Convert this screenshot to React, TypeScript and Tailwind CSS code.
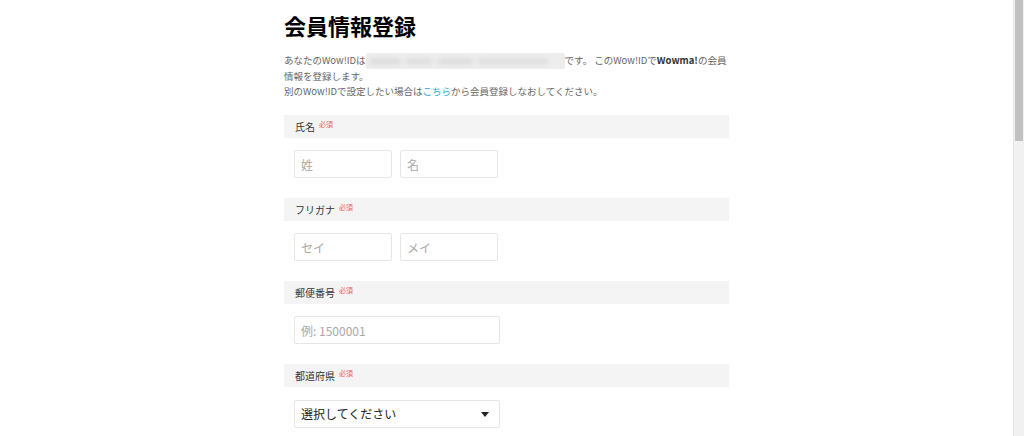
const font = { fontFamily: '"Noto Sans CJK JP", "Noto Sans", sans-serif' };

function Required() {
  return <span className="ml-[4px] text-[7px] leading-none text-[#f25a5a] relative -top-[2px]">必須</span>;
}

function SectionHead({ label }: { label: string }) {
  return (
    <div className="h-[23px] bg-[#f4f4f4] flex items-center pl-[11px] text-[10px] text-[#333]">
      {label}
      <Required />
    </div>
  );
}

function TextBox({ placeholder, width }: { placeholder: string; width: string }) {
  return (
    <input
      placeholder={placeholder}
      className={`${width} h-[28px] border border-[#e6e6e6] rounded-[2px] px-[6px] text-[12px] text-[#333] placeholder-[#a8a8a8] outline-none`}
      style={font}
    />
  );
}

// blurred-out e-mail address
function Masked() {
  return (
    <span className="inline-flex items-center gap-[6px] align-middle w-[199px] h-[16px] bg-[#ededed] rounded-[2px] overflow-hidden px-[4px]">
      <span className="w-[30px] h-[5px] bg-[#dadada] blur-[2px]" />
      <span className="w-[26px] h-[5px] bg-[#dcdcdc] blur-[2px]" />
      <span className="w-[34px] h-[5px] bg-[#dadada] blur-[2px]" />
      <span className="w-[70px] h-[5px] bg-[#dedede] blur-[2px]" />
    </span>
  );
}

export default function App() {
  return (
    <div className="flex h-[436px] w-[1024px] overflow-hidden bg-white" style={font}>
      <div className="flex-1">
        <div className="mx-auto w-[445px] pt-[11px]">
          <h1 className="text-[22px] leading-[28px] font-bold text-black">会員情報登録</h1>

          <p className="mt-[14px] mb-[16px] text-[9.5px] leading-[15px] text-[#666]">
            あなたのWow!IDは<Masked />です。 このWow!IDで<b className="text-[#333]">Wowma!</b>の会員情報を登録します。
            <br />
            別のWow!IDで設定したい場合は<span className="text-[#29a9d6]">こちら</span>から会員登録しなおしてください。
          </p>

          <div className="flex flex-col">
            <SectionHead label="氏名" />
            <div className="flex gap-[8px] pl-[10px] mt-[12px] mb-[20px]">
              <TextBox placeholder="姓" width="w-[98px]" />
              <TextBox placeholder="名" width="w-[98px]" />
            </div>

            <SectionHead label="フリガナ" />
            <div className="flex gap-[8px] pl-[10px] mt-[12px] mb-[20px]">
              <TextBox placeholder="セイ" width="w-[98px]" />
              <TextBox placeholder="メイ" width="w-[98px]" />
            </div>

            <SectionHead label="郵便番号" />
            <div className="flex pl-[10px] mt-[12px] mb-[20px]">
              <TextBox placeholder="例: 1500001" width="w-[206px]" />
            </div>

            <SectionHead label="都道府県" />
            <div className="flex pl-[10px] mt-[13px]">
              <div className="w-[206px] h-[28px] border border-[#e6e6e6] rounded-[2px] flex items-center justify-between pl-[6px] pr-[10px] text-[12px] text-[#222]">
                選択してください
                <svg width="8" height="5" viewBox="0 0 8 5">
                  <path d="M0 0h8L4 5z" fill="#222" />
                </svg>
              </div>
            </div>
          </div>
        </div>
      </div>

      <div className="w-[11px] h-full bg-[#f1f1f1] border-l border-[#e6e6e6] flex flex-col">
        <div className="h-[141px] mx-[1px] bg-[#c1c1c1]" />
      </div>
    </div>
  );
}
